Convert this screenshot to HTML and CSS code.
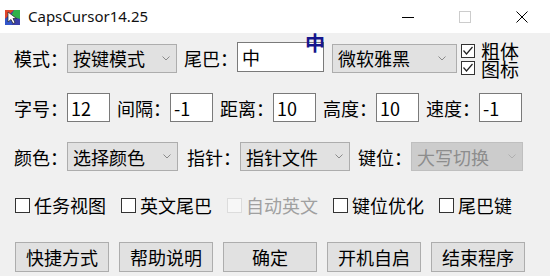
FILE: index.html
```html
<!DOCTYPE html>
<html lang="zh-CN">
<head>
    <meta charset="UTF-8">
    <title>CapsCursor14.25</title>
    <link rel="stylesheet" href="styles.css">
</head>
<body>
    <div class="window">
        <div class="titlebar">
            <svg class="app-icon" width="15" height="15" viewBox="0 0 15 15">
                <rect x="0" y="0" width="15" height="15" fill="#3b3fa8"/>
                <polygon points="0,0 9,0 0,9" fill="#e0452b"/>
                <polygon points="9,0 15,0 15,9 6,6" fill="#2fb24a"/>
                <polygon points="0,9 6,6 7,15 0,15" fill="#3356c9"/>
                <polygon points="3,2 3,12 6,9.5 8,13.5 10,12.5 8,8.5 11.5,8.5" fill="#ffffff" stroke="#222" stroke-width="0.7"/>
            </svg>
            <span class="title">CapsCursor14.25</span>
            <div class="caption">
                <span class="cap-btn">
                    <svg width="12" height="12" viewBox="0 0 12 12"><line x1="0" y1="6.5" x2="12" y2="6.5" stroke="#000" stroke-width="1"/></svg>
                </span>
                <span class="cap-btn">
                    <svg width="12" height="12" viewBox="0 0 12 12"><rect x="0.5" y="0.5" width="11" height="11" fill="none" stroke="#cccccc" stroke-width="1"/></svg>
                </span>
                <span class="cap-btn">
                    <svg width="12" height="12" viewBox="0 0 12 12"><path d="M0.5 0.5 L11.5 11.5 M11.5 0.5 L0.5 11.5" stroke="#000" stroke-width="1"/></svg>
                </span>
            </div>
        </div>

        <div class="content">
            <div class="row row-mode">
                <span class="label">模式：</span>
                <div class="combo combo-mode">
                    <span>按键模式</span>
                    <svg class="chevron" width="8" height="5" viewBox="0 0 8 5"><polyline points="0.5,0.5 4,4 7.5,0.5" fill="none" stroke="#8a8a8a"/></svg>
                </div>
                <span class="label label-tail">尾巴：</span>
                <div class="tail-wrap">
                    <input class="edit edit-tail" type="text" value="中">
                    <span class="tail-preview">中</span>
                </div>
                <div class="combo combo-font">
                    <span>微软雅黑</span>
                    <svg class="chevron" width="8" height="5" viewBox="0 0 8 5"><polyline points="0.5,0.5 4,4 7.5,0.5" fill="none" stroke="#8a8a8a"/></svg>
                </div>
                <div class="check-stack">
                    <div class="check">
                        <span class="box"><svg width="12" height="12" viewBox="0 0 12 12"><polyline points="1.5,5.5 4.5,9 10.5,2" fill="none" stroke="#222" stroke-width="1.2"/></svg></span>
                        <span>粗体</span>
                    </div>
                    <div class="check">
                        <span class="box"><svg width="12" height="12" viewBox="0 0 12 12"><polyline points="1.5,5.5 4.5,9 10.5,2" fill="none" stroke="#222" stroke-width="1.2"/></svg></span>
                        <span>图标</span>
                    </div>
                </div>
            </div>

            <div class="row row-size">
                <span class="label">字号：</span>
                <input class="edit edit-num" type="text" value="12">
                <span class="label label-num">间隔：</span>
                <input class="edit edit-num" type="text" value="-1">
                <span class="label label-num">距离：</span>
                <input class="edit edit-num" type="text" value="10">
                <span class="label label-num">高度：</span>
                <input class="edit edit-num" type="text" value="10">
                <span class="label label-num">速度：</span>
                <input class="edit edit-num" type="text" value="-1">
            </div>

            <div class="row row-color">
                <span class="label">颜色：</span>
                <div class="combo combo-color">
                    <span>选择颜色</span>
                    <svg class="chevron" width="8" height="5" viewBox="0 0 8 5"><polyline points="0.5,0.5 4,4 7.5,0.5" fill="none" stroke="#8a8a8a"/></svg>
                </div>
                <span class="label label-pointer">指针：</span>
                <div class="combo combo-pointer">
                    <span>指针文件</span>
                    <svg class="chevron" width="8" height="5" viewBox="0 0 8 5"><polyline points="0.5,0.5 4,4 7.5,0.5" fill="none" stroke="#8a8a8a"/></svg>
                </div>
                <span class="label label-key">键位：</span>
                <div class="combo combo-key disabled">
                    <span>大写切换</span>
                    <svg class="chevron" width="8" height="5" viewBox="0 0 8 5"><polyline points="0.5,0.5 4,4 7.5,0.5" fill="none" stroke="#b0b0b0"/></svg>
                </div>
            </div>

            <div class="row row-options">
                <div class="option"><span class="box"></span><span>任务视图</span></div>
                <div class="option"><span class="box"></span><span>英文尾巴</span></div>
                <div class="option disabled"><span class="box"></span><span>自动英文</span></div>
                <div class="option"><span class="box"></span><span>键位优化</span></div>
                <div class="option"><span class="box"></span><span>尾巴键</span></div>
            </div>

            <div class="row row-buttons">
                <button class="btn">快捷方式</button>
                <button class="btn">帮助说明</button>
                <button class="btn">确定</button>
                <button class="btn">开机自启</button>
                <button class="btn">结束程序</button>
            </div>
        </div>
    </div>
</body>
</html>
```

FILE: styles.css
```css
body {
    margin: 0;
    padding: 0;
    background: #f0f0f0;
    font-family: "Noto Sans CJK SC", "Noto Sans", sans-serif;
    color: #000;
}
.window {
    width: 550px;
    height: 276px;
    overflow: hidden;
    background: #f0f0f0;
}

/* 标题栏 */
.titlebar {
    height: 33px;
    background: #ffffff;
    display: flex;
    align-items: center;
}
.app-icon {
    margin-left: 5px;
    margin-top: 2px;
}
.title {
    margin-left: 8px;
    font-family: "Noto Sans", sans-serif;
    font-size: 15px;
    line-height: 33px;
    color: #111;
}
.caption {
    margin-left: auto;
    display: flex;
    height: 33px;
}
.cap-btn {
    width: 57px;
    display: flex;
    align-items: center;
    justify-content: center;
}

/* 内容区 */
.content {
    padding-left: 14px;
}
.row {
    display: flex;
    align-items: center;
    font-size: 18px;
    line-height: 20px;
    white-space: nowrap;
}
.row-mode {
    margin-top: 7px;
    height: 36px;
}
.row-size {
    margin-top: 17px;
    height: 29px;
}
.row-color {
    margin-top: 20px;
    height: 29px;
}
.row-options {
    margin-top: 20px;
    height: 28px;
}
.row-buttons {
    margin-top: 23px;
    height: 30px;
    gap: 10px;
    padding-left: 1px;
}

.label {
    width: 54px;
    margin-right: -1px;
}
.label-tail {
    margin-left: 7px;
}
.label-num {
    margin-left: 7px;
}
.label-pointer {
    margin-left: 9px;
}
.label-key {
    margin-left: 8px;
}

/* 下拉框 */
.combo {
    box-sizing: border-box;
    height: 29px;
    background: #e1e1e1;
    border: 1px solid #adadad;
    display: flex;
    align-items: center;
    padding-left: 5px;
    padding-right: 6px;
}
.combo .chevron {
    margin-left: auto;
}
.combo-mode {
    width: 110px;
}
.combo-font {
    width: 125px;
    margin-left: 8px;
    padding-right: 10px;
}
.combo-color {
    width: 111px;
}
.combo-pointer {
    width: 110px;
}
.combo-key {
    width: 112px;
}
.combo.disabled {
    background: #cccccc;
    border-color: #bfbfbf;
    color: #8d8d8d;
}

/* 文本框 */
.edit {
    box-sizing: border-box;
    height: 29px;
    margin: 0;
    padding: 0 3px;
    border: 1px solid #7a7a7a;
    background: #ffffff;
    font-family: "Noto Sans CJK SC", sans-serif;
    font-size: 18px;
    color: #000;
    outline: none;
}
.edit-num {
    width: 43px;
}
.tail-wrap {
    position: relative;
    margin-bottom: 3px;
}
.edit-tail {
    width: 87px;
    height: 30px;
    padding-left: 4px;
    display: block;
}
.tail-preview {
    position: absolute;
    right: -1px;
    top: -9px;
    font-size: 20px;
    line-height: 20px;
    font-weight: bold;
    color: #16168c;
}

/* 复选框 */
.check-stack {
    margin-left: 4px;
    margin-top: 3px;
    display: flex;
    flex-direction: column;
    font-size: 19px;
    line-height: 17.5px;
}
.check {
    display: flex;
    align-items: center;
}
.box {
    box-sizing: border-box;
    width: 14px;
    height: 14px;
    border: 1px solid #333333;
    background: #ffffff;
    display: flex;
    align-items: center;
    justify-content: center;
    margin-right: 5px;
    flex: none;
}
.check .box {
    margin-right: 6px;
}
.option {
    display: flex;
    align-items: center;
    margin-right: 15px;
}
.option:first-child {
    margin-left: 1px;
}
.option .box {
    width: 15px;
    height: 15px;
    margin-right: 4px;
}
.option.disabled {
    color: #a0a0a0;
}
.option.disabled .box {
    border-color: #dcdcdc;
    background: #f7f7f7;
}

/* 按钮 */
.btn {
    box-sizing: border-box;
    width: 94px;
    height: 30px;
    margin: 0;
    padding: 0;
    background: #e1e1e1;
    border: 1px solid #adadad;
    font-family: "Noto Sans CJK SC", sans-serif;
    font-size: 18px;
    line-height: 20px;
    color: #000;
}
```
